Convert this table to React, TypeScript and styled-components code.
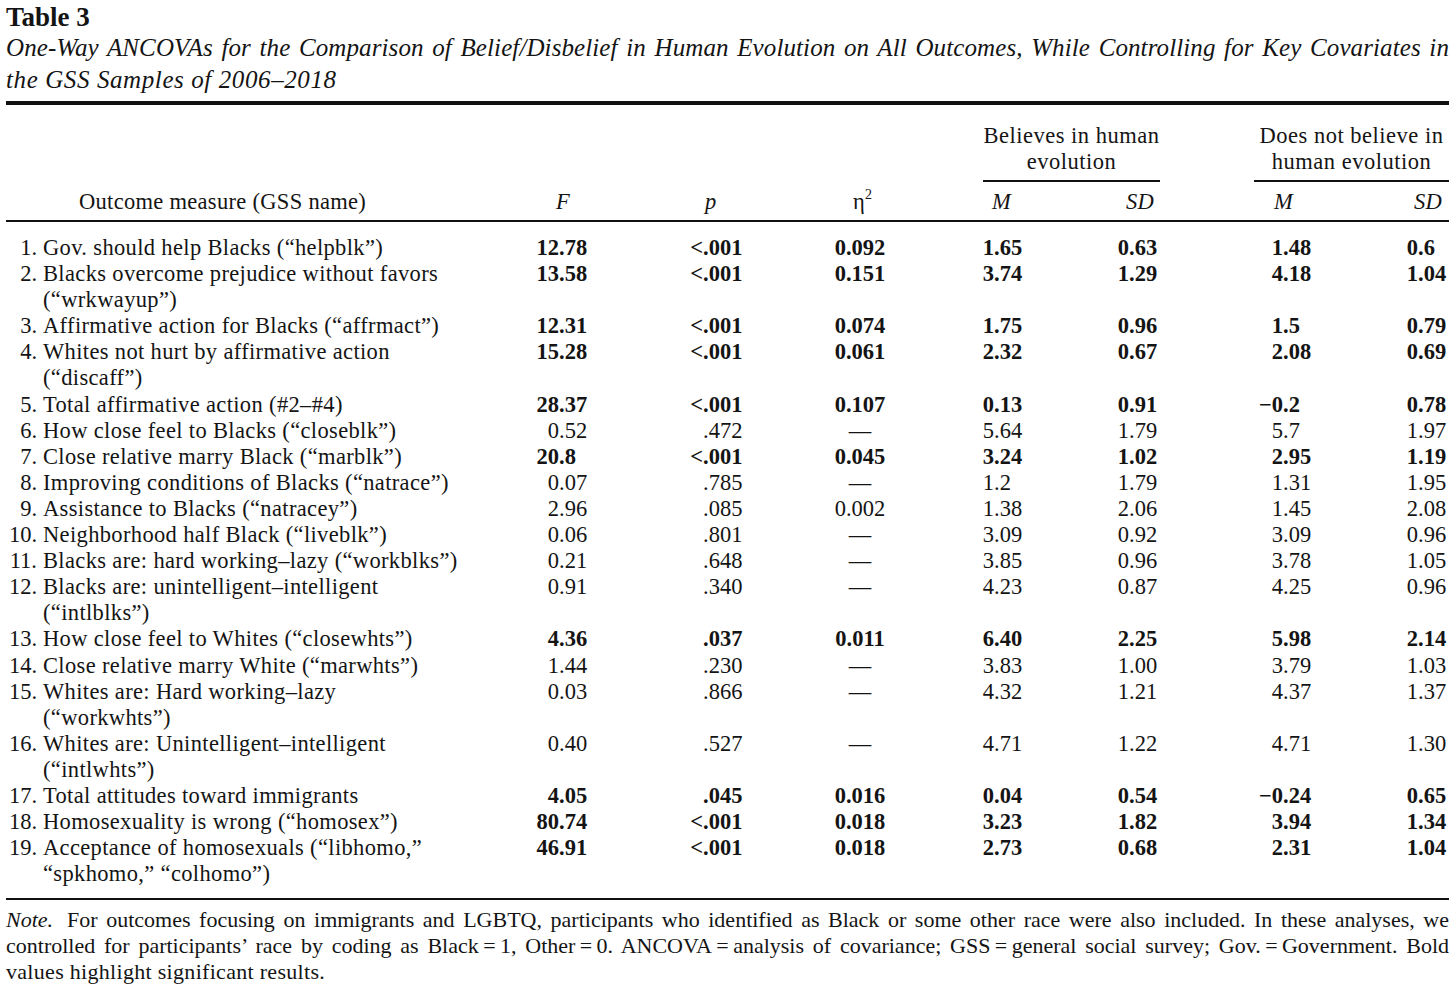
import React from "react";
import styled, { createGlobalStyle } from "styled-components";

const COLS = "514px 120px 140px 160px 125px 147px 142px 95px";

const Global = createGlobalStyle`
  html, body { margin: 0; padding: 0; background: #ffffff; }
  body {
    font-family: "Liberation Serif", "Times New Roman", serif;
    color: #141414;
  }
`;

const Page = styled.div`
  width: 1443px;
  padding: 2px 7px 0 6px;
`;

const Title = styled.div`
  font-size: 27px;
  font-weight: bold;
  line-height: 30px;
`;

const Caption = styled.div`
  font-style: italic;
  font-size: 25px;
  line-height: 32px;
`;

const JustLine = styled.div<{ $ls?: number }>`
  text-align: justify;
  text-align-last: justify;
  letter-spacing: ${(p) => p.$ls ?? 0}px;
`;

const CaptionTail = styled.div`
  letter-spacing: 0.6px;
`;

const TopRule = styled.div`
  margin-top: 5px;
  height: 4px;
  background: #111;
`;

const HeadGrid = styled.div`
  display: grid;
  grid-template-columns: ${COLS};
  padding: 18px 0 5px;
  border-bottom: 2px solid #111;
  font-size: 22.5px;
  line-height: 26px;
`;

const GroupHead = styled.div<{ $col: string; $ml: number; $mr: number }>`
  grid-row: 1;
  grid-column: ${(p) => p.$col};
  margin: 0 ${(p) => p.$mr}px 0 ${(p) => p.$ml}px;
  padding-bottom: 5px;
  border-bottom: 2px solid #111;
  text-align: center;
  letter-spacing: 0.5px;
`;

const SubHead = styled.div<{ $pl: number; $italic?: boolean }>`
  grid-row: 2;
  padding: 7px 0 0 ${(p) => p.$pl}px;
  font-style: ${(p) => (p.$italic ? "italic" : "normal")};
  white-space: nowrap;
  letter-spacing: 0.3px;
`;

const Sup = styled.sup`
  font-size: 14px;
  line-height: 0;
  vertical-align: 10px;
`;

const Body = styled.div`
  padding: 13px 0 11px;
  border-bottom: 2px solid #111;
`;

const Row = styled.div<{ $bold?: boolean }>`
  display: grid;
  grid-template-columns: ${COLS};
  font-size: 22.5px;
  line-height: 26.1px;
  & > div:not(:first-child) {
    font-weight: ${(p) => (p.$bold ? "bold" : "normal")};
  }
`;

const Label = styled.div`
  display: flex;
  letter-spacing: 0.35px;
  white-space: nowrap;
`;

const LabelNum = styled.span`
  flex: none;
  width: 31px;
  text-align: right;
  letter-spacing: 0;
`;

const LabelText = styled.span`
  padding-left: 6px;
`;

const Num = styled.div`
  display: flex;
  white-space: nowrap;
`;

const IntPart = styled.span<{ $w: number }>`
  flex: none;
  width: ${(p) => p.$w}px;
  text-align: right;
`;

const Centered = styled.div`
  text-align: center;
  white-space: nowrap;
`;

const Note = styled.div`
  padding-top: 7px;
  font-size: 22px;
  line-height: 26px;
  letter-spacing: 0.3px;
`;

const NoteLabel = styled.span`
  font-style: italic;
  margin-right: 14px;
`;

type DataRow = { n: string; lines: string[]; v: string[]; b?: boolean };

const rows: DataRow[] = [
  { n: "1.", lines: ["Gov. should help Blacks (“helpblk”)"], v: ["12.78", "<.001", "0.092", "1.65", "0.63", "1.48", "0.6"], b: true },
  { n: "2.", lines: ["Blacks overcome prejudice without favors", "(“wrkwayup”)"], v: ["13.58", "<.001", "0.151", "3.74", "1.29", "4.18", "1.04"], b: true },
  { n: "3.", lines: ["Affirmative action for Blacks (“affrmact”)"], v: ["12.31", "<.001", "0.074", "1.75", "0.96", "1.5", "0.79"], b: true },
  { n: "4.", lines: ["Whites not hurt by affirmative action", "(“discaff”)"], v: ["15.28", "<.001", "0.061", "2.32", "0.67", "2.08", "0.69"], b: true },
  { n: "5.", lines: ["Total affirmative action (#2–#4)"], v: ["28.37", "<.001", "0.107", "0.13", "0.91", "−0.2", "0.78"], b: true },
  { n: "6.", lines: ["How close feel to Blacks (“closeblk”)"], v: ["0.52", ".472", "—", "5.64", "1.79", "5.7", "1.97"] },
  { n: "7.", lines: ["Close relative marry Black (“marblk”)"], v: ["20.8", "<.001", "0.045", "3.24", "1.02", "2.95", "1.19"], b: true },
  { n: "8.", lines: ["Improving conditions of Blacks (“natrace”)"], v: ["0.07", ".785", "—", "1.2", "1.79", "1.31", "1.95"] },
  { n: "9.", lines: ["Assistance to Blacks (“natracey”)"], v: ["2.96", ".085", "0.002", "1.38", "2.06", "1.45", "2.08"] },
  { n: "10.", lines: ["Neighborhood half Black (“liveblk”)"], v: ["0.06", ".801", "—", "3.09", "0.92", "3.09", "0.96"] },
  { n: "11.", lines: ["Blacks are: hard working–lazy (“workblks”)"], v: ["0.21", ".648", "—", "3.85", "0.96", "3.78", "1.05"] },
  { n: "12.", lines: ["Blacks are: unintelligent–intelligent", "(“intlblks”)"], v: ["0.91", ".340", "—", "4.23", "0.87", "4.25", "0.96"] },
  { n: "13.", lines: ["How close feel to Whites (“closewhts”)"], v: ["4.36", ".037", "0.011", "6.40", "2.25", "5.98", "2.14"], b: true },
  { n: "14.", lines: ["Close relative marry White (“marwhts”)"], v: ["1.44", ".230", "—", "3.83", "1.00", "3.79", "1.03"] },
  { n: "15.", lines: ["Whites are: Hard working–lazy", "(“workwhts”)"], v: ["0.03", ".866", "—", "4.32", "1.21", "4.37", "1.37"] },
  { n: "16.", lines: ["Whites are: Unintelligent–intelligent", "(“intlwhts”)"], v: ["0.40", ".527", "—", "4.71", "1.22", "4.71", "1.30"] },
  { n: "17.", lines: ["Total attitudes toward immigrants"], v: ["4.05", ".045", "0.016", "0.04", "0.54", "−0.24", "0.65"], b: true },
  { n: "18.", lines: ["Homosexuality is wrong (“homosex”)"], v: ["80.74", "<.001", "0.018", "3.23", "1.82", "3.94", "1.34"], b: true },
  { n: "19.", lines: ["Acceptance of homosexuals (“libhomo,”", "“spkhomo,” “colhomo”)"], v: ["46.91", "<.001", "0.018", "2.73", "0.68", "2.31", "1.04"], b: true },
];

// distance from column start to the decimal point; null = centred column
const DEC: (number | null)[] = [39, 63, null, 54, 64, 71, 64];

function Cell({ value, dec }: { value: string; dec: number | null }) {
  const i = value.indexOf(".");
  if (dec === null || i < 0) return <Centered>{value}</Centered>;
  return (
    <Num>
      <IntPart $w={dec}>{value.slice(0, i)}</IntPart>
      <span>{value.slice(i)}</span>
    </Num>
  );
}

const T = "\u2009";

export default function App() {
  return (
    <>
      <Global />
      <Page>
        <Title>Table 3</Title>
        <Caption>
          <JustLine $ls={0.1}>
            One-Way ANCOVAs for the Comparison of Belief/Disbelief in Human Evolution on All Outcomes, While Controlling for Key Covariates in
          </JustLine>
          <CaptionTail>the GSS Samples of 2006–2018</CaptionTail>
        </Caption>
        <TopRule />
        <HeadGrid>
          <GroupHead $col="5 / 7" $ml={43} $mr={52}>
            Believes in human
            <br />
            evolution
          </GroupHead>
          <GroupHead $col="7 / 9" $ml={42} $mr={0}>
            Does not believe in
            <br />
            human evolution
          </GroupHead>
          <SubHead $pl={73}>Outcome measure (GSS name)</SubHead>
          <SubHead $pl={36} $italic>F</SubHead>
          <SubHead $pl={65} $italic>p</SubHead>
          <SubHead $pl={73}>
            η<Sup>2</Sup>
          </SubHead>
          <SubHead $pl={52} $italic>M</SubHead>
          <SubHead $pl={61} $italic>SD</SubHead>
          <SubHead $pl={62} $italic>M</SubHead>
          <SubHead $pl={60} $italic>SD</SubHead>
        </HeadGrid>
        <Body>
          {rows.map((r) => (
            <Row key={r.n} $bold={r.b}>
              <Label>
                <LabelNum>{r.n}</LabelNum>
                <LabelText>
                  {r.lines.map((l, k) => (
                    <React.Fragment key={k}>
                      {k > 0 && <br />}
                      {l}
                    </React.Fragment>
                  ))}
                </LabelText>
              </Label>
              {r.v.map((v, k) => (
                <Cell key={k} value={v} dec={DEC[k]} />
              ))}
            </Row>
          ))}
        </Body>
        <Note>
          <JustLine>
            <NoteLabel>Note.</NoteLabel>For outcomes focusing on immigrants and LGBTQ, participants who identified as Black or some other race were also included. In these analyses, we
          </JustLine>
          <JustLine>
            controlled for participants’ race by coding as Black{T}={T}1, Other{T}={T}0. ANCOVA{T}={T}analysis of covariance; GSS{T}={T}general social survey; Gov.{T}={T}Government. Bold
          </JustLine>
          <div>values highlight significant results.</div>
        </Note>
      </Page>
    </>
  );
}
